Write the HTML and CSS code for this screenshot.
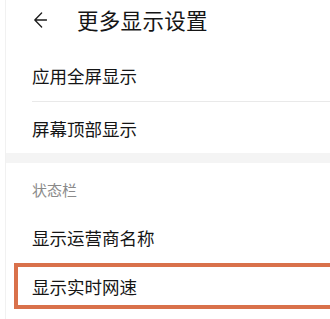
FILE: index.html
```html
<!DOCTYPE html>
<html lang="zh">
<head>
<meta charset="utf-8">
<link rel="stylesheet" href="styles.css">
</head>
<body>
<div class="page">
  <div class="header">
    <svg class="back" width="13" height="16" viewBox="0 0 13 16"><path d="M7.6 1 L0.8 8 L7.6 15 M0.8 8 H12.6" fill="none" stroke="#1c1c1c" stroke-width="1.3" stroke-linecap="round" stroke-linejoin="round"/></svg>
    <span class="title">更多显示设置</span>
  </div>
  <div class="group first">
    <div class="row">应用全屏显示</div>
    <div class="divider"></div>
    <div class="row second">屏幕顶部显示</div>
  </div>
  <div class="band"></div>
  <div class="section">状态栏</div>
  <div class="row third">显示运营商名称</div>
  <div class="row highlight">显示实时网速</div>
</div>
</body>
</html>
```
FILE: styles.css
```css
html, body {
  margin: 0;
  padding: 0;
  background: #fff;
}
body {
  font-family: "Noto Sans CJK SC", "Noto Sans", sans-serif;
  color: #151515;
}
.page {
  margin-left: 5px;
  border-left: 1px solid #f1f1f1;
  height: 319px;
}
.header {
  height: 38px;
  display: flex;
  align-items: center;
  padding-left: 28px;
}
.back {
  display: block;
  margin-top: 1px;
}
.title {
  margin-left: 30px;
  font-size: 21.5px;
  font-weight: 400;
  letter-spacing: 0.3px;
}
.group.first {
  padding-top: 12px;
}
.row {
  height: 51px;
  display: flex;
  align-items: center;
  padding-left: 26px;
  font-size: 17.5px;
}
.row.second {
  padding-top: 2px;
  height: 49px;
}
.divider {
  height: 1px;
  background: #e9e9e9;
  margin-left: 26px;
}
.band {
  height: 10px;
  background: #f4f4f4;
}
.section {
  height: 50px;
  display: flex;
  align-items: center;
  padding-left: 26px;
  padding-top: 2px;
  box-sizing: border-box;
  font-size: 15px;
  color: #8a8a8a;
}
.row.third {
  height: 48px;
  padding-bottom: 2px;
}
.row.highlight {
  box-sizing: border-box;
  height: 46px;
  margin-left: 8px;
  padding-left: 14px;
  border: 4px solid #d9714b;
  border-right: none;
}
```
